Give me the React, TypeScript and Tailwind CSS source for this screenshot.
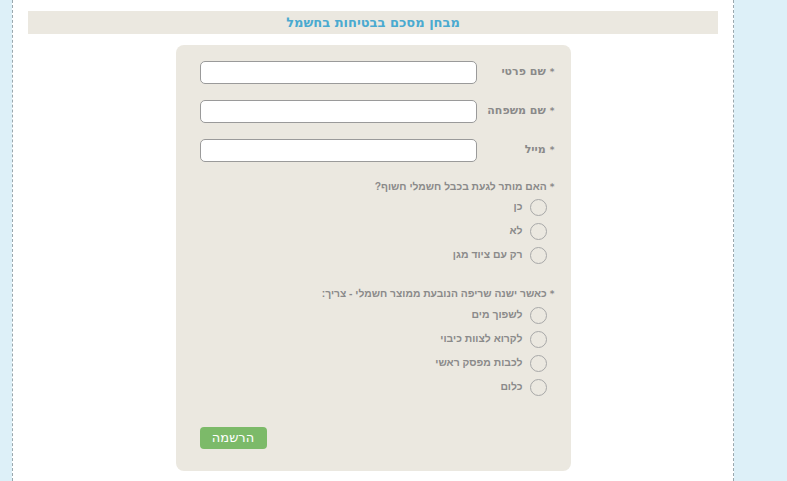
import React from "react";

const font = { fontFamily: '"DejaVu Sans", "Liberation Sans", Arial, sans-serif' };
const narrow = { fontFamily: '"Liberation Sans", Arial, sans-serif' };
const star = { fontFamily: '"DejaVu Sans", sans-serif' };

function Field({ label }: { label: string }) {
  return (
    <div className="flex items-center h-[23px]">
      <div className="flex-1 text-[11px] font-bold text-[#8a8a8a]">
        <span className="text-[9px] ml-[4px]">*</span>
        {label}
      </div>
      <div className="w-[277px] h-[23px] bg-white border border-[#9a9a9a] rounded-[5px]" />
    </div>
  );
}

function Radio({ label }: { label: string }) {
  return (
    <div className="flex items-center h-[24px] pr-[8px]">
      <div className="w-[17px] h-[17px] rounded-full border border-[#a8a8a8]" />
      <span className="mr-[7px] text-[10.4px] font-bold text-[#8a8a8a]" style={narrow}>
        {label}
      </span>
    </div>
  );
}

function Question({ label }: { label: string }) {
  return (
    <div className="text-[10.3px] font-bold text-[#8a8a8a] h-[14px] leading-[14px]" style={narrow}>
      <span className="text-[9px] ml-[3px]" style={star}>
        *
      </span>
      {label}
    </div>
  );
}

export default function App() {
  return (
    <div className="flex w-[787px] h-[481px] overflow-hidden bg-[#ddf0f8]" style={font}>
      <div className="w-[12px] shrink-0" />
      <div className="w-[722px] shrink-0 bg-white border-l border-r border-dashed border-[#9aa8ae] pt-[11px] px-[15px]">
        <div className="h-[23px] bg-[#ebe8e0] flex items-center justify-center" dir="rtl">
          <span className="text-[13px] font-bold text-[#4aaad0]">מבחן מסכם בבטיחות בחשמל</span>
        </div>
        <div
          className="mx-auto mt-[11px] w-[395px] h-[426px] bg-[#ebe8e0] rounded-[8px] pt-[16px] pr-[16px] pl-[24px]"
          dir="rtl"
        >
          <div className="flex flex-col gap-[16px]">
            <Field label="שם פרטי" />
            <Field label="שם משפחה" />
            <Field label="מייל" />
          </div>
          <div className="mt-[18px]">
            <Question label="האם מותר לגעת בכבל חשמלי חשוף?" />
            <div className="mt-[1px]">
              <Radio label="כן" />
              <Radio label="לא" />
              <Radio label="רק עם ציוד מגן" />
            </div>
          </div>
          <div className="mt-[20px]">
            <Question label="כאשר ישנה שריפה הנובעת ממוצר חשמלי - צריך:" />
            <div className="mt-[2px]">
              <Radio label="לשפוך מים" />
              <Radio label="לקרוא לצוות כיבוי" />
              <Radio label="לכבות מפסק ראשי" />
              <Radio label="כלום" />
            </div>
          </div>
          <div className="mt-[28px] flex justify-end">
            <button className="w-[67px] h-[22px] rounded-[4px] bg-[#7cba69] text-white text-[13px] flex items-center justify-center">
              הרשמה
            </button>
          </div>
        </div>
      </div>
      <div className="flex-1" />
    </div>
  );
}
